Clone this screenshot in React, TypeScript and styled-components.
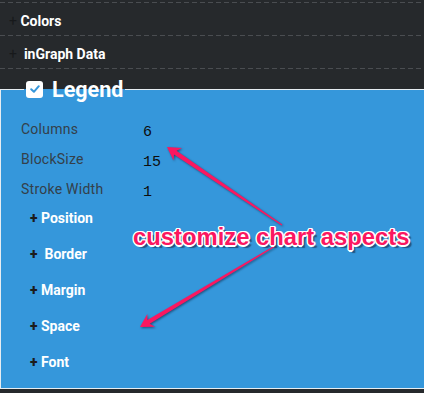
import React from "react";
import styled, { createGlobalStyle } from "styled-components";

const Global = createGlobalStyle`
  html, body {
    margin: 0;
    padding: 0;
    background: #26292c;
    overflow: hidden;
  }
  body {
    font-family: Roboto, "Liberation Sans", Arial, sans-serif;
  }
`;

const Page = styled.div`
  position: relative;
  width: 424px;
  height: 393px;
  overflow: hidden;
  background: #26292c;
`;

const dash = `linear-gradient(to right, #4a4d51 0 5px, transparent 5px 8px)`;

const Sections = styled.div`
  margin-top: 2px;
  background: ${dash} repeat-x left top / 8px 1px;
  padding-top: 1px;
`;

const SectionRow = styled.div`
  height: 28px;
  padding: 4px 0 1px 9px;
  line-height: 28px;
  color: #ffffff;
  font-size: 14px;
  font-weight: 700;
  white-space: pre;
  background: ${dash} repeat-x left bottom / 8px 1px;
`;

const Plus = styled.span<{ $tone?: "dim" | "dark" }>`
  color: ${(p) => (p.$tone === "dim" ? "#17191b" : "#1c1c1c")};
  font-weight: ${(p) => (p.$tone === "dim" ? 400 : 900)};
`;

const Panel = styled.fieldset`
  margin: 9px -10px 0 0;
  padding: 0 0 4px 0;
  border: 1px solid #e6edf2;
  background: #3597db;
  min-width: 0;
`;

const PanelLegend = styled.legend`
  margin-left: 23px;
  padding: 0 2px;
  height: 22px;
  display: flex;
  align-items: center;
  gap: 9px;
`;

const CheckBox = styled.span`
  width: 17px;
  height: 17px;
  border-radius: 3px;
  background: #ffffff;
  display: flex;
  align-items: center;
  justify-content: center;
`;

const LegendText = styled.span`
  align-self: flex-start;
  margin-top: 1px;
  font-size: 21.5px;
  line-height: 22px;
  font-weight: 700;
  color: #ffffff;
`;

const PanelBody = styled.div`
  padding: 14px 0 0 20px;
`;

const PropRow = styled.div`
  display: flex;
  height: 30px;
`;

const PropLabel = styled.span`
  width: 122px;
  line-height: 30px;
  font-size: 14px;
  letter-spacing: 0.25px;
  color: #34404a;
`;

const PropValue = styled.span`
  margin-top: 4px;
  line-height: 30px;
  font-family: "Liberation Mono", "Courier New", monospace;
  font-size: 15px;
  color: #0d0d0d;
`;

const SubItem = styled.div`
  padding: 0 0 8px 29px;
  line-height: 28px;
  font-size: 14px;
  font-weight: 700;
  color: #ffffff;
  white-space: pre;
`;

const Overlay = styled.svg`
  position: absolute;
  left: 0;
  top: 0;
  pointer-events: none;
  filter: drop-shadow(1.5px 1.5px 0.8px rgba(18, 40, 70, 0.65));
`;

const Callout = styled.div`
  position: absolute;
  left: 133px;
  top: 224px;
  font-family: "Liberation Sans", Arial, sans-serif;
  font-weight: 700;
  font-size: 23.8px;
  line-height: 26px;
  color: #fb1760;
  white-space: nowrap;
  text-shadow: 1.5px 0 0 #fff, -1.5px 0 0 #fff, 0 1.5px 0 #fff, 0 -1.5px 0 #fff,
    1px 1px 0 #fff, -1px -1px 0 #fff, 1px -1px 0 #fff, -1px 1px 0 #fff,
    3px 3px 1px rgba(20, 40, 70, 0.6);
`;

type Pt = [number, number];

function arrowPoints(tail: Pt, tip: Pt, headLen: number, headW: number, wTail: number, wHead: number): string {
  const dx = tip[0] - tail[0];
  const dy = tip[1] - tail[1];
  const len = Math.hypot(dx, dy);
  const ux = dx / len;
  const uy = dy / len;
  const nx = -uy;
  const ny = ux;
  const bx = tip[0] - ux * headLen;
  const by = tip[1] - uy * headLen;
  const jx = bx + ux * 3;
  const jy = by + uy * 3;
  const pts: Pt[] = [
    [tail[0] + (nx * wTail) / 2, tail[1] + (ny * wTail) / 2],
    [jx + (nx * wHead) / 2, jy + (ny * wHead) / 2],
    [bx + nx * headW, by + ny * headW],
    tip,
    [bx - nx * headW, by - ny * headW],
    [jx - (nx * wHead) / 2, jy - (ny * wHead) / 2],
    [tail[0] - (nx * wTail) / 2, tail[1] - (ny * wTail) / 2],
  ];
  return pts.map((p) => `${p[0].toFixed(1)},${p[1].toFixed(1)}`).join(" ");
}

const props = [
  { label: "Columns", value: "6" },
  { label: "BlockSize", value: "15" },
  { label: "Stroke Width", value: "1" },
];

const subs = ["Position", " Border", "Margin", "Space", "Font"];

export default function App() {
  return (
    <Page>
      <Global />
      <Sections>
        <SectionRow>
          <Plus $tone="dim">+</Plus> Colors
        </SectionRow>
        <SectionRow>
          <Plus $tone="dim">+</Plus>  inGraph Data
        </SectionRow>
      </Sections>
      <Panel>
        <PanelLegend>
          <CheckBox>
            <svg width="12" height="12" viewBox="0 0 12 12">
              <path d="M2.2 6.2 L4.9 8.8 L9.8 3.2" fill="none" stroke="#3597db" strokeWidth="2" strokeLinecap="round" strokeLinejoin="round" />
            </svg>
          </CheckBox>
          <LegendText>Legend</LegendText>
        </PanelLegend>
        <PanelBody>
          {props.map((p) => (
            <PropRow key={p.label}>
              <PropLabel>{p.label}</PropLabel>
              <PropValue>{p.value}</PropValue>
            </PropRow>
          ))}
        </PanelBody>
        {subs.map((s) => (
          <SubItem key={s}>
            <Plus $tone="dark">+</Plus> {s}
          </SubItem>
        ))}
      </Panel>
      <Overlay width="424" height="393" viewBox="0 0 424 393">
        <polygon points={arrowPoints([282, 225], [167, 147], 13, 7.5, 1.2, 4.5)} fill="#fb1760" />
        <polygon points={arrowPoints([275, 246], [140, 327], 13, 7.5, 1.2, 4.5)} fill="#fb1760" />
      </Overlay>
      <Callout>customize chart aspects</Callout>
    </Page>
  );
}
